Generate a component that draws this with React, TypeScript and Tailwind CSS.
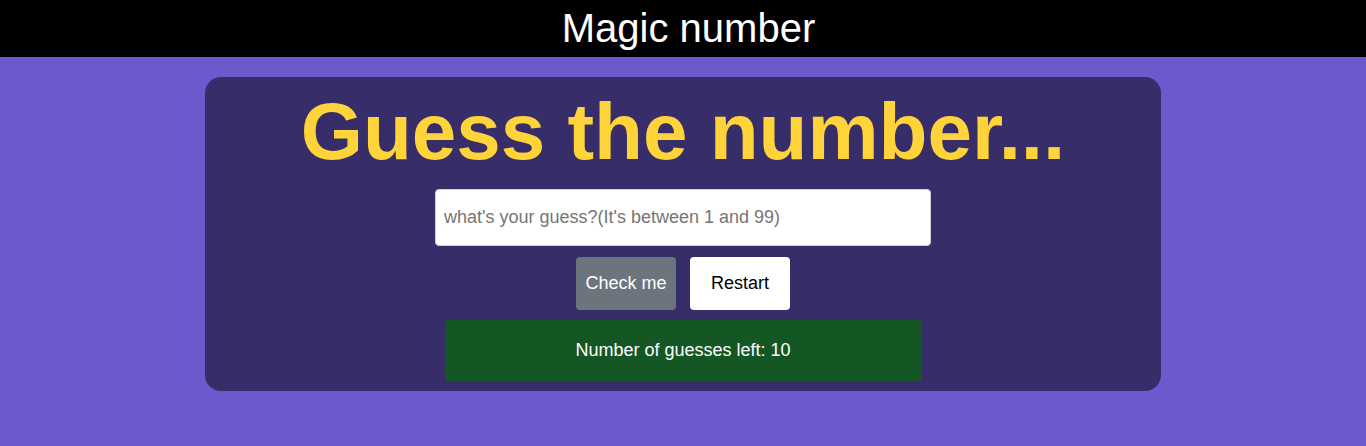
export default function App() {
  return (
    <div className="min-h-[446px] bg-[#6a5acd] font-['Liberation_Sans',Arial,sans-serif]">
      <header className="h-[57px] bg-black flex justify-center pt-[5px] pl-[11px]">
        <h1 className="text-[40px] leading-[46px] text-white">Magic number</h1>
      </header>
      <div className="flex justify-center pt-[20px]">
        <main className="w-[956px] h-[314px] bg-[#372e69] rounded-[16px] flex flex-col items-center pt-[9px]">
          <h2 className="text-[80px] leading-[92px] font-bold text-[#ffd43b]">Guess the number...</h2>
          <input
            type="text"
            placeholder="what's your guess?(It's between 1 and 99)"
            className="mt-[11px] w-[496px] h-[57px] bg-white rounded-[4px] border border-[#d0d0dc] px-[8px] text-[18px] text-black placeholder:text-[#757575] outline-none"
          />
          <div className="mt-[11px] flex gap-[14px]">
            <button className="w-[100px] h-[53px] rounded-[4px] bg-[#6c757d] text-white text-[18px]">Check me</button>
            <button className="w-[100px] h-[53px] rounded-[4px] bg-white text-black text-[18px]">Restart</button>
          </div>
          <div className="mt-[10px] w-[477px] h-[61px] rounded-[4px] bg-[#155724] text-white text-[18px] flex items-center justify-center">
            Number of guesses left: 10
          </div>
        </main>
      </div>
    </div>
  );
}
